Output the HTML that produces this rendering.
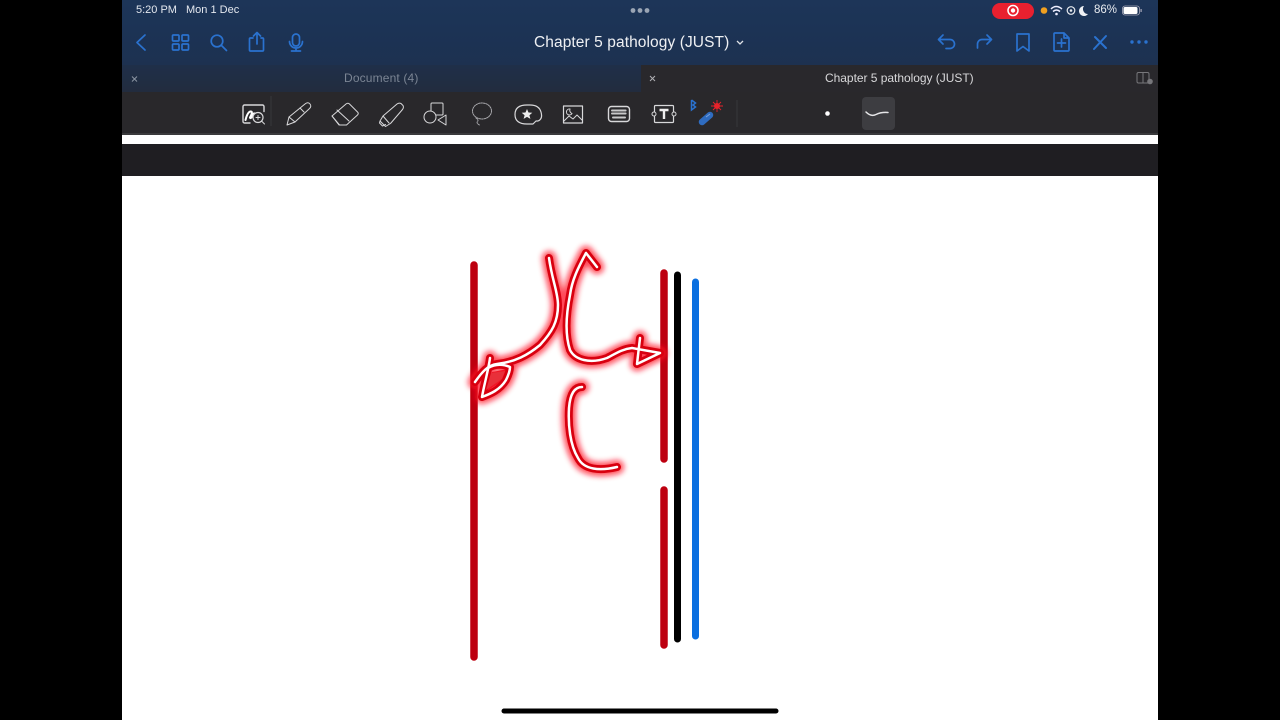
<!DOCTYPE html>
<html><head><meta charset="utf-8"><style>
html,body{margin:0;padding:0;background:#000;width:1280px;height:720px;overflow:hidden}
#s{position:absolute;left:122px;top:0;width:1036px;height:720px;background:#fff;overflow:hidden;font-family:"Liberation Sans",sans-serif;filter:blur(.25px)}
.a{position:absolute;white-space:nowrap}
svg{position:absolute;left:0;top:0;filter:blur(.3px)}
</style></head><body>
<div id="s">
<div class="a" style="left:0;top:0;width:1036px;height:66px;background:linear-gradient(#1d3558,#1c3355 45%,#1d3150)"></div>
<div class="a" style="left:0;top:65px;width:519px;height:27px;background:linear-gradient(#1f2f49,#222c3e)"></div>
<div class="a" style="left:519px;top:65px;width:517px;height:27px;background:#29282c"></div>
<div class="a" style="left:0;top:92px;width:1036px;height:42px;background:#29282b"></div>
<div class="a" style="left:0;top:133px;width:1036px;height:2px;background:#3a3a3c"></div>
<div class="a" style="left:0;top:144px;width:1036px;height:32px;background:#1f1e22"></div>
<div class="a" style="left:14px;top:3px;font-size:11px;line-height:14px;color:#e4e8ef">5:20 PM</div>
<div class="a" style="left:64px;top:3px;font-size:11px;line-height:14px;color:#e4e8ef">Mon 1 Dec</div>
<div class="a" style="left:972px;top:3px;font-size:11.500px;line-height:14px;color:#e8ebf0">86%</div>
<div class="a" style="left:412px;top:33.500px;font-size:15.500px;line-height:18px;letter-spacing:.09px;color:#eef0f3">Chapter 5 pathology (JUST)</div>
<div class="a" style="left:222px;top:71px;font-size:12px;line-height:15px;letter-spacing:.15px;color:#7b8594">Document (4)</div>
<div class="a" style="left:703px;top:71px;font-size:12px;line-height:15px;letter-spacing:-.03px;color:#d8d8da">Chapter 5 pathology (JUST)</div>
<div class="a" style="left:870px;top:3px;width:42px;height:16px;border-radius:8px;background:#e8202f"></div>
<div class="a" style="left:740px;top:97px;width:33px;height:33px;border-radius:4px;background:#3d3d41"></div>
</div>
<svg width="1280" height="720" viewBox="0 0 1280 720" fill="none">
<defs><filter id="g" x="-30%" y="-30%" width="160%" height="160%"><feGaussianBlur stdDeviation="2.800"/></filter></defs>
<!-- status -->
<circle cx="633" cy="10.500" r="2.400" fill="#9aa5b5"/><circle cx="640" cy="10.500" r="2.400" fill="#9aa5b5"/><circle cx="647" cy="10.500" r="2.400" fill="#9aa5b5"/>
<circle cx="1013" cy="10.500" r="5" stroke="#fff" stroke-width="1.500"/><circle cx="1013" cy="10.500" r="2.200" fill="#fff"/>
<circle cx="1044" cy="10.500" r="3.300" fill="#f0a020"/>
<path d="M1051 9q5-5 11 0M1053 11.500q3.500-3 7 0" stroke="#eef" stroke-width="1.500"/><circle cx="1056.500" cy="14" r="1.300" fill="#eef"/>
<circle cx="1071" cy="10.500" r="3.800" stroke="#e8ebf0" stroke-width="1.200"/><circle cx="1071" cy="10.500" r="1.300" fill="#e8ebf0"/>
<path d="M1084 6a5 5 0 1 0 4 8a5 5 0 0 1-4-8z" fill="#eef0f4"/>
<rect x="1122.500" y="6" width="17" height="9" rx="2.500" stroke="#aab" stroke-width=".8"/><rect x="1123.500" y="7" width="14" height="7" rx="1.500" fill="#fff"/><rect x="1140.500" y="9" width="1.200" height="3" fill="#aab"/>
<!-- left nav -->
<g stroke="#2a72cf" stroke-width="1.700" stroke-linecap="round" stroke-linejoin="round">
<path d="M145 35l-8 7.500 8 7.500"/>
<rect x="172.500" y="35" width="6.500" height="6" rx="1"/><rect x="182" y="35" width="6.500" height="6" rx="1"/><rect x="172.500" y="44" width="6.500" height="6" rx="1"/><rect x="182" y="44" width="6.500" height="6" rx="1"/>
<circle cx="217" cy="41" r="5.800"/><path d="M221.500 45.500l5 5"/>
<path d="M253 38h-2.500a1 1 0 0 0-1 1v11a1 1 0 0 0 1 1h12a1 1 0 0 0 1-1V39a1 1 0 0 0-1-1H261M257 44V33M253.500 36l3.500-3.500 3.500 3.500"/>
<rect x="292.500" y="34" width="7" height="12" rx="3.500"/><path d="M289.500 41.500a6.500 6.500 0 0 0 13 0M296 48v3M291.500 51h9"/>
<!-- right nav -->
<path d="M943 35l-4.500 4.500 4.500 4.500M939 39.500h11a4.500 4.500 0 0 1 0 9h-4"/>
<path d="M987 35l4.500 4.500-4.500 4.500M991 39.500h-9a4.500 4.500 0 0 0-4.500 4.500v4"/>
<path d="M1017 34h12v17l-6-4.500-6 4.500z"/>
<path d="M1055 33h9l5 5v12a1 1 0 0 1-1 1h-13a1 1 0 0 1-1-1V34a1 1 0 0 1 1-1zM1064 33v5h5M1061.500 39v8M1057.500 43h8"/>
<path d="M1095 37l11 11M1106 36l-12 13" stroke-width="2"/>
</g>
<circle cx="1132" cy="42" r="1.700" fill="#2a72cf"/><circle cx="1139" cy="42" r="1.700" fill="#2a72cf"/><circle cx="1146" cy="42" r="1.700" fill="#2a72cf"/>
<path d="M737 41l3 3 3-3" stroke="#dfe2e6" stroke-width="1.300"/>
<path d="M132 76.500l5 5M137 76.500l-5 5" stroke="#8b95a3" stroke-width="1"/>
<path d="M650 76l5 5M655 76l-5 5" stroke="#b0b0b4" stroke-width="1"/>
<rect x="1137" y="72.500" width="12" height="10.500" rx="1.500" stroke="#77777b" stroke-width="1"/><path d="M1143 72.500v10.500" stroke="#77777b"/><circle cx="1150" cy="81.500" r="2.800" fill="#77777b"/>
<!-- tool bar -->
<g stroke="#d8d8da" stroke-width="1" stroke-linejoin="round" stroke-linecap="round">
<path d="M250 123h-5.500a1.500 1.500 0 0 1-1.500-1.500v-15a1.500 1.500 0 0 1 1.500-1.500h18a1.500 1.500 0 0 1 1.500 1.500v5" stroke-width="1.400"/>
<path d="M245.500 120q2-8 5-8.500t-.5 6q.5 2 2.500-2t2.500-.5" stroke="#fff" stroke-width="2"/>
<circle cx="258" cy="117.500" r="5" fill="#29282b" stroke-width="1.200"/><path d="M256 117.500h4M258 115.500v4M261.500 121l3 3"/>
<path d="M287 125l2-8 16-13q3-2.500 5 0t-1 5l-14 13z"/><path d="M289 117l6 5M300 108l4 4"/>
<path d="M332 116l14-12q2-1.500 3.500 0l8 8q1.500 1.500 0 3l-11 10h-7z"/><path d="M337 110l12 11M332 116l7 9"/>
<path d="M380 121l3-5 14-12q2-1.500 4-.5l2 2q1 2-.5 4l-12 14-5 3zM383 116l6 7M380 121l-.500 2 3 3 3-1.500"/>
<rect x="431" y="103" width="12" height="12" rx="1"/><circle cx="430" cy="117" r="6" fill="#29282b"/><path d="M446 115v10l-8-5z"/>
<ellipse cx="482" cy="111" rx="9.500" ry="8" stroke="#a8a8ac" stroke-dasharray="1.500 1"/><path d="M476 118q3 2 1.500 3.500t2 3.500" stroke="#a8a8ac" stroke-dasharray="1.500 1"/>
<path d="M527 105h3q9 0 11 7t-3 9l-2 0-3 3h-6q-12 0-12-9.500t12-9.500z" stroke-width="1.200"/>
<path d="M527 109l1.500 3.500 3.800.3-2.900 2.400 1 3.700-3.400-2-3.400 2 1-3.700-2.900-2.400 3.800-.3z" fill="#eee" stroke="none"/>
<rect x="563.500" y="106" width="19" height="17" stroke-width="1.200"/><path d="M564 121l5-5 4 3 4-4 5 5"/><path d="M570 109a3 3 0 1 0 2 4.500a3.500 3.500 0 0 1-2-4.500z"/>
<rect x="608.500" y="106.500" width="21" height="15" rx="3" stroke-width="1.400"/>
<path d="M612 110.500h14M612 113.500h14" stroke="#c8c8ca" stroke-dasharray="1.600 .4" stroke-width="2"/><path d="M613 117.500h12" stroke="#c8c8ca" stroke-width="2"/>
<rect x="654.500" y="105.500" width="19" height="17" rx="1" stroke-width="1.200"/>
</g>
<circle cx="654" cy="114" r="2" fill="#29282b" stroke="#d8d8da"/><circle cx="674" cy="114" r="2" fill="#29282b" stroke="#d8d8da"/>
<path d="M659.500 110h9M664 110v9" stroke="#eee" stroke-width="2.400"/>
<path d="M691.500 100l4 3-2.500 2 2.500 2-4 3v-10" stroke="#2a72cf" stroke-width="1.500"/>
<path d="M702 122l8-7" stroke="#2f6cc0" stroke-width="6.500" stroke-linecap="round"/>
<path d="M706 117l4-3" stroke="#7ba3db" stroke-width="1"/>
<circle cx="717" cy="106" r="3" fill="#e8222a"/><path d="M717 100v12M711 106h12M713 102l8 8M721 102l-8 8" stroke="#e8222a" stroke-width=".9"/>
<path d="M737 100v27" stroke="#38383b"/>
<path d="M271 96v30" stroke="#38383b"/>
<circle cx="827.500" cy="113.500" r="2.300" fill="#fff"/>
<path d="M866 112q5 5 10 2.500t12-2" stroke="#e6e6e8" stroke-width="1.500" stroke-linecap="round"/>
<!-- strokes -->
<g stroke-linecap="round" stroke-linejoin="round">
<path d="M474 265V657M664 273V459M664 490V645" stroke="#bd0010" stroke-width="7.500"/>
<path d="M677.500 275V639" stroke="#000" stroke-width="7"/>
<path d="M695.500 282V636" stroke="#0a6fe0" stroke-width="7"/>
<path d="M492 372L484 393L504 380L508 369z" fill="#d8202c"/>
<g filter="url(#g)" stroke="#ff1020" stroke-width="14" opacity=".75">
<path d="M549 258C552 280 558 292 558 305C558 322 552 332 540 345C528 355 515 362 497 364C488 365 482 372 475 382M490 358C488 372 484 385 482 397C490 394 500 390 506 380C509 374 510 370 510 367C503 364 495 364 488 368"/>
<path d="M597 267L586 253C578 268 572 280 570 295C566 315 565 335 570 350C575 360 590 364 607 358C615 354 622 349 632 348L660 353L637 364L640 338M582 387C574 387 570 395 569 408C568 425 570 445 578 458C584 470 600 471 617 467"/>
</g>
<g fill="none" stroke="#d8000f" stroke-width="8">
<path d="M549 258C552 280 558 292 558 305C558 322 552 332 540 345C528 355 515 362 497 364C488 365 482 372 475 382M490 358C488 372 484 385 482 397C490 394 500 390 506 380C509 374 510 370 510 367C503 364 495 364 488 368"/>
<path d="M597 267L586 253C578 268 572 280 570 295C566 315 565 335 570 350C575 360 590 364 607 358C615 354 622 349 632 348L660 353L637 364L640 338M582 387C574 387 570 395 569 408C568 425 570 445 578 458C584 470 600 471 617 467"/>
</g>
<path d="M491 373L486 390L502 379L505 371z" fill="#e8303a"/>
<g fill="none" stroke="#fff" stroke-width="2.500">
<path d="M549 258C552 280 558 292 558 305C558 322 552 332 540 345C528 355 515 362 497 364C488 365 482 372 475 382M490 358C488 372 484 385 482 397C490 394 500 390 506 380C509 374 510 370 510 367C503 364 495 364 488 368"/>
<path d="M597 267L586 253C578 268 572 280 570 295C566 315 565 335 570 350C575 360 590 364 607 358C615 354 622 349 632 348L660 353L637 364L640 338M582 387C574 387 570 395 569 408C568 425 570 445 578 458C584 470 600 471 617 467"/>
</g>
</g>
<path d="M504 711H776" stroke="#000" stroke-width="5" stroke-linecap="round"/>
</svg>
</body></html>
